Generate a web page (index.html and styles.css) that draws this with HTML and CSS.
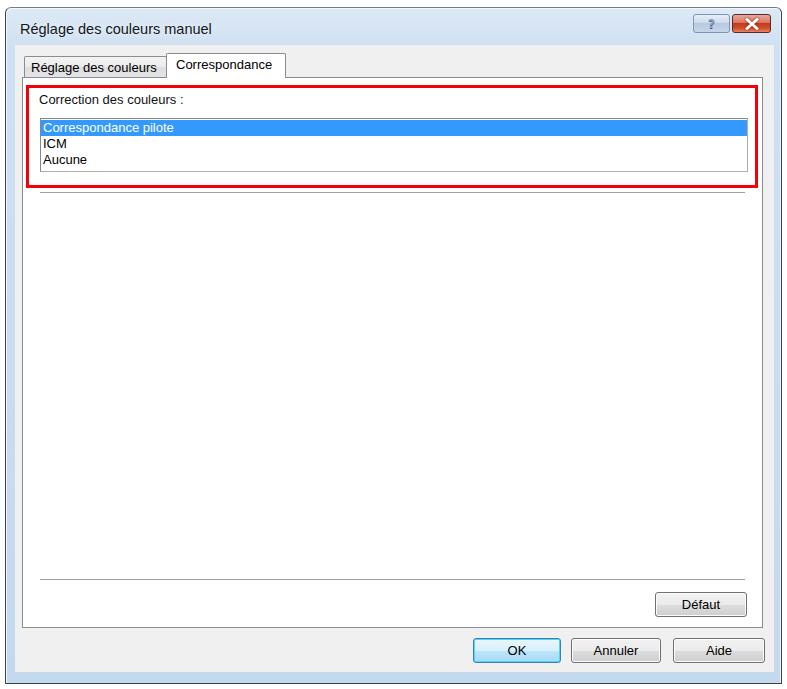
FILE: index.html
```html
<!DOCTYPE html>
<html lang="fr">
<head>
<meta charset="utf-8">
<title>Réglage des couleurs manuel</title>
<link rel="stylesheet" href="styles.css">
</head>
<body>
<div class="window">
  <div class="titlebar">
    <span class="title">Réglage des couleurs manuel</span>
    <div class="caption-buttons">
      <div class="cap-btn help"><span class="q">?</span></div>
      <div class="cap-btn close">
        <svg width="14" height="12" viewBox="0 0 14 12"><path d="M2 1.5 L12 10.5 M12 1.5 L2 10.5" stroke="#fff" stroke-width="3" stroke-linecap="round"/></svg>
      </div>
    </div>
  </div>
  <div class="client">
    <div class="tabs">
      <div class="tab">Réglage des couleurs</div>
      <div class="tab active">Correspondance</div>
    </div>
    <div class="panel">
      <div class="highlight">
        <div class="label">Correction des couleurs :</div>
        <div class="listbox">
          <div class="item selected">Correspondance pilote</div>
          <div class="item">ICM</div>
          <div class="item">Aucune</div>
        </div>
      </div>
      <div class="sep top-sep"></div>
      <div class="spacer"></div>
      <div class="sep"></div>
      <div class="panel-actions">
        <div class="btn wide">Défaut</div>
      </div>
    </div>
    <div class="actions">
      <div class="btn default">OK</div>
      <div class="btn">Annuler</div>
      <div class="btn aide">Aide</div>
    </div>
  </div>
</div>
</body>
</html>
```

FILE: styles.css
```css
html, body {
  margin: 0;
  padding: 0;
  background: #ffffff;
}

body {
  font-family: "Liberation Sans", Arial, sans-serif;
  font-size: 13px;
  color: #000;
}

.window {
  margin: 7px 0 0 5px;
  width: 777px;
  height: 677px;
  box-sizing: border-box;
  border: 1px solid #3b4148;
  border-top-color: #6f7e8f;
  border-radius: 6px 6px 0 0;
  background: linear-gradient(to bottom, #dde9f6 0px, #cfe0f2 40px, #c4d8ee 100%);
  padding: 0 7px 11px 9px;
  display: flex;
  flex-direction: column;
  box-shadow: inset 1px 1px 0 #f4f8fc, inset -1px 0 0 #eef4fb;
}

.titlebar {
  height: 37px;
  flex: none;
  display: flex;
  align-items: flex-start;
  position: relative;
}

.title {
  margin-top: 12px;
  margin-left: 5px;
  font-size: 14.5px;
  line-height: 18px;
  color: #101820;
  text-shadow: 0 0 6px rgba(255,255,255,0.9);
}

.caption-buttons {
  margin-left: auto;
  margin-top: 6px;
  margin-right: 3px;
  display: flex;
  gap: 2px;
}

.cap-btn {
  height: 19px;
  box-sizing: border-box;
  border: 1px solid #6e7f93;
  border-radius: 3px;
  display: flex;
  align-items: center;
  justify-content: center;
}

.cap-btn.help {
  width: 37px;
  background: linear-gradient(to bottom, #e6eef8 0%, #cfdcec 45%, #b7c9df 50%, #c6d6e9 100%);
  border-color: #8195ad;
}

.cap-btn.help .q {
  font-family: "DejaVu Sans", sans-serif;
  font-weight: bold;
  font-size: 12px;
  color: #8fa3bd;
  text-shadow: 0 1px 0 #445c78;
  line-height: 1;
}

.cap-btn.close {
  width: 39px;
  background: linear-gradient(to bottom, #e9a99b 0%, #d9785f 45%, #c4391b 50%, #d5522f 80%, #e88b62 100%);
  border-color: #5a2c22;
}

.cap-btn.close svg {
  filter: drop-shadow(0 0 1px #6a1d0c);
}

.client {
  flex: 1;
  background: #f0f0f0;
  display: flex;
  flex-direction: column;
  padding: 8px 9px 9px 0;
}

.tabs {
  display: flex;
  align-items: flex-end;
  height: 24px;
  padding-left: 9px;
  position: relative;
  z-index: 1;
}

.tab {
  height: 21px;
  box-sizing: border-box;
  border: 1px solid #898c95;
  border-bottom: none;
  border-radius: 2px 2px 0 0;
  background: linear-gradient(to bottom, #f3f3f3 0%, #ebebeb 50%, #dedede 51%, #e4e4e4 100%);
  padding: 3px 6px 0 6px;
  line-height: 16px;
  width: 143px;
  white-space: nowrap;
}

.tab.active {
  height: 25px;
  width: 120px;
  margin-left: -1px;
  margin-bottom: -1px;
  background: #ffffff;
  padding: 3px 0 0 9px;
}

.panel {
  flex: 1;
  margin-left: 7px;
  margin-right: 2px;
  background: #ffffff;
  border: 1px solid #898c95;
  display: flex;
  flex-direction: column;
  padding: 0 0 10px 0;
}

.highlight {
  margin: 7px 4px 0 3px;
  border: 3px solid #f2000c;
  padding: 4px 7px 13px 11px;
}

.label {
  line-height: 16px;
  margin-left: -1px;
  color: #111;
}

.listbox {
  margin-top: 10px;
  height: 54px;
  box-sizing: border-box;
  border: 1px solid #828790;
  border-right-color: #aab0b8;
  border-bottom-color: #aab0b8;
  padding: 1px 0 0 0;
  background: #fff;
}

.item {
  height: 16px;
  line-height: 16px;
  padding-left: 2px;
}

.item.selected {
  background: #3399ff;
  color: #ffffff;
}

.sep {
  height: 1px;
  background: #a0a0a0;
  border-bottom: 1px solid #ffffff;
  margin: 0 17px 0 17px;
}

.top-sep {
  margin-top: 4px;
}

.spacer {
  flex: 1;
}

.panel-actions {
  display: flex;
  justify-content: flex-end;
  padding: 11px 15px 0 0;
}

.btn {
  height: 25px;
  box-sizing: border-box;
  border: 1px solid #707070;
  border-radius: 3px;
  background: linear-gradient(to bottom, #f2f2f2 0%, #ebebeb 50%, #dddddd 51%, #cfcfcf 100%);
  box-shadow: inset 0 0 0 1px #fcfcfc;
  display: flex;
  align-items: center;
  justify-content: center;
  width: 90px;
  color: #000;
}

.btn.wide {
  width: 92px;
}

.actions {
  display: flex;
  justify-content: flex-end;
  gap: 10px;
  padding-top: 10px;
}

.btn.default {
  width: 88px;
  border-color: #3c7fb1;
  box-shadow: inset 0 0 0 1px #48d8fb;
  background: linear-gradient(to bottom, #eaf6fd 0%, #d9f0fc 50%, #bee6fd 51%, #a7d9f5 100%);
}

.btn.aide {
  width: 92px;
  margin-left: 2px;
}
```
